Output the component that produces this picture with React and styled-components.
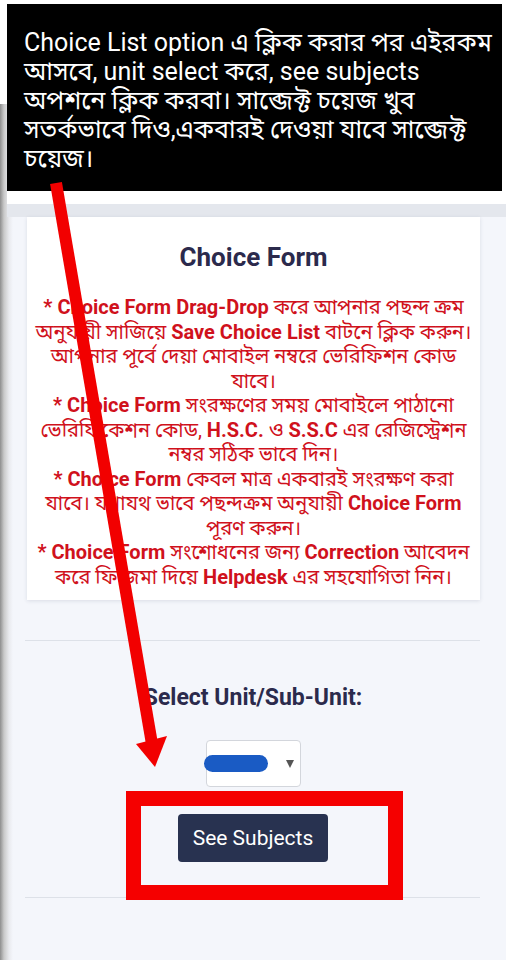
import React from "react";
import styled, { createGlobalStyle } from "styled-components";

const Global = createGlobalStyle`
  html, body { margin: 0; padding: 0; background: #ffffff; }
  body { width: 506px; height: 960px; overflow: hidden; font-family: Roboto, "Noto Sans Bengali", "Noto Sans", sans-serif; }
  * { box-sizing: border-box; }
`;

const Page = styled.div`
  position: relative;
  width: 506px;
  height: 960px;
  overflow: hidden;
  display: flex;
  flex-direction: column;
`;

const Header = styled.div`
  height: 104px;
  flex: none;
  background: #ffffff;
`;

const Main = styled.div`
  flex: 1;
  display: flex;
  flex-direction: column;
  align-items: center;
  background: linear-gradient(to right, #8e8e8e 0px, #c9c9c9 4px, #e9eaee 9px, #f4f6fb 13px) #f4f6fb;
`;

const SubBar = styled.div`
  align-self: stretch;
  flex: none;
  height: 113px;
  margin-left: 7px;
  background: #ffffff;
  border-bottom: 13px solid #e4e7ed;
`;

const Card = styled.section`
  width: 453px;
  flex: none;
  margin: 0 0 0 1px;
  padding: 25px 0 11px;
  background: #ffffff;
  box-shadow: 0 1px 4px rgba(30, 40, 70, 0.12);
  text-align: center;
`;

const Title = styled.h2`
  margin: 0 0 23px;
  font-size: 26px;
  line-height: 30px;
  font-weight: 700;
  color: #2b2a4c;
`;

const Notice = styled.div`
  font-size: 20px;
  line-height: 24.5px;
  color: #d0111c;
`;

const Line = styled.span`
  display: block;
  white-space: nowrap;
`;

const Strong = styled.b`
  font-weight: 700;
`;

const Divider = styled.hr`
  align-self: stretch;
  flex: none;
  margin: ${(p) => p.$top}px 26px 0 25px;
  border: 0;
  border-top: 1px solid #dde1e8;
  height: 0;
`;

const Label = styled.div`
  margin-top: 44px;
  font-size: 23px;
  line-height: 26px;
  font-weight: 700;
  color: #2b2a4c;
`;

const Select = styled.div`
  margin-top: 29px;
  flex: none;
  width: 95px;
  height: 47px;
  display: flex;
  align-items: center;
  justify-content: space-between;
  padding-right: 6px;
  background: #ffffff;
  border: 1px solid #d3d6dc;
  border-radius: 4px;
`;

const Scribble = styled.span`
  width: 64px;
  height: 17px;
  margin-left: -3px;
  border-radius: 9px;
  background: #1a5bc4;
`;

const Caret = styled.span`
  width: 0;
  height: 0;
  border-left: 4px solid transparent;
  border-right: 4px solid transparent;
  border-top: 8px solid #555;
`;

const ButtonRow = styled.div`
  position: relative;
  flex: none;
  display: flex;
  margin-top: 27px;
`;

const Button = styled.button`
  width: 150px;
  height: 48px;
  border: 0;
  border-radius: 4px;
  background: #283250;
  color: #ffffff;
  font-family: Roboto, sans-serif;
  font-size: 21px;
  cursor: pointer;
`;

const Highlight = styled.div`
  position: absolute;
  left: -52px;
  top: -23px;
  width: 277px;
  height: 109px;
  border: 15px solid #f50000;
  pointer-events: none;
`;

const Banner = styled.div`
  position: absolute;
  top: 4px;
  left: 7px;
  width: 495px;
  height: 187px;
  padding: 24px 8px 0 17px;
  background: #000000;
  color: #ffffff;
  font-size: 25px;
  line-height: 29px;
`;

const Arrow = styled.svg`
  position: absolute;
  top: 0;
  left: 0;
  pointer-events: none;
`;

export default function App() {
  return (
    <Page>
      <Global />
      <Header />
      <Main>
        <SubBar />
        <Card>
          <Title>Choice Form</Title>
          <Notice>
            <Line>
              <Strong>* Choice Form Drag-Drop</Strong> করে আপনার পছন্দ ক্রম
            </Line>
            <Line>
              অনুযায়ী সাজিয়ে <Strong>Save Choice List</Strong> বাটনে ক্লিক করুন।
            </Line>
            <Line>আপনার পূর্বে দেয়া মোবাইল নম্বরে ভেরিফিশন কোড</Line>
            <Line>যাবে।</Line>
            <Line>
              <Strong>* Choice Form</Strong> সংরক্ষণের সময় মোবাইলে পাঠানো
            </Line>
            <Line>
              ভেরিফিকেশন কোড, <Strong>H.S.C.</Strong> ও <Strong>S.S.C</Strong> এর রেজিস্ট্রেশন
            </Line>
            <Line>নম্বর সঠিক ভাবে দিন।</Line>
            <Line>
              <Strong>* Choice Form</Strong> কেবল মাত্র একবারই সংরক্ষণ করা
            </Line>
            <Line>
              যাবে। যথাযথ ভাবে পছন্দক্রম অনুযায়ী <Strong>Choice Form</Strong>
            </Line>
            <Line>পূরণ করুন।</Line>
            <Line>
              <Strong>* Choice Form</Strong> সংশোধনের জন্য <Strong>Correction</Strong> আবেদন
            </Line>
            <Line>
              করে ফি জমা দিয়ে <Strong>Helpdesk</Strong> এর সহযোগিতা নিন।
            </Line>
          </Notice>
        </Card>
        <Divider $top={40} />
        <Label>Select Unit/Sub-Unit:</Label>
        <Select>
          <Scribble />
          <Caret />
        </Select>
        <ButtonRow>
          <Button>See Subjects</Button>
          <Highlight />
        </ButtonRow>
        <Divider $top={35} />
      </Main>
      <Banner>
        <Line>Choice List option এ ক্লিক করার পর এইরকম</Line>
        <Line>আসবে, unit select করে, see subjects</Line>
        <Line>অপশনে ক্লিক করবা। সাব্জেক্ট চয়েজ খুব</Line>
        <Line>সতর্কভাবে দিও,একবারই দেওয়া যাবে সাব্জেক্ট</Line>
        <Line>চয়েজ।</Line>
      </Banner>
      <Arrow width="506" height="960" viewBox="0 0 506 960">
        <line x1="56" y1="183" x2="152" y2="744" stroke="#f20000" strokeWidth="12" />
        <polygon points="136,744 167,736 155,767" fill="#f20000" />
      </Arrow>
    </Page>
  );
}
